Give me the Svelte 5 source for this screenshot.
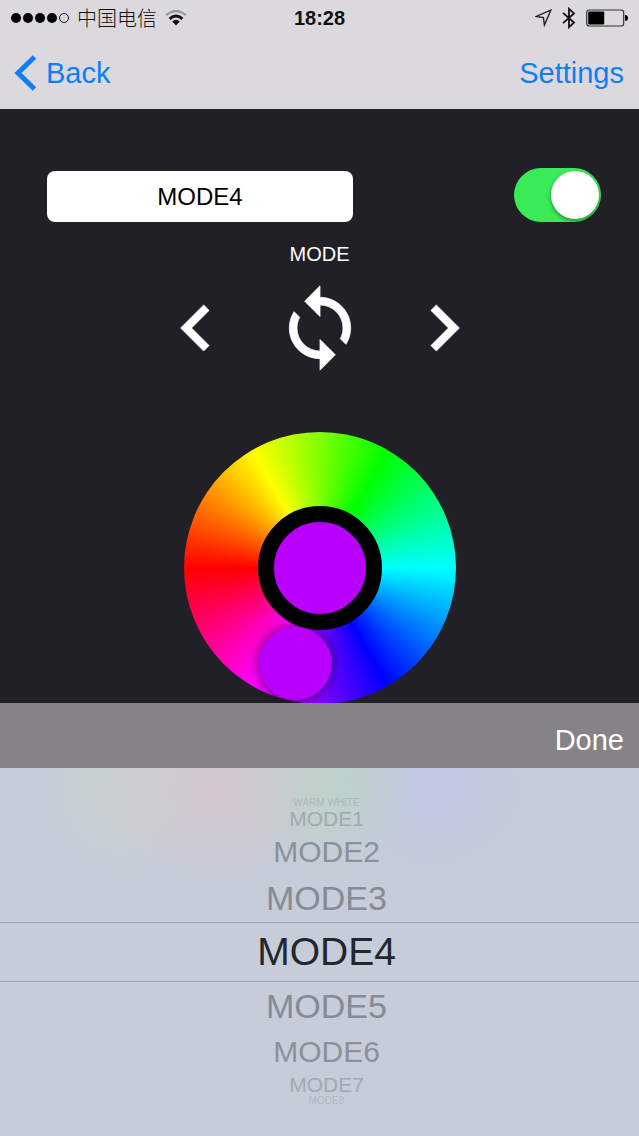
<script lang="ts">
  const modes = ['WARM WHITE', 'MODE1', 'MODE2', 'MODE3', 'MODE4', 'MODE5', 'MODE6', 'MODE7', 'MODE8'];

  let selected = $state(4);
  let power = $state(true);

  // how far a row is from the middle of the drum, 4 rows are visible each way
  function depth(i: number) {
    return Math.min(4, Math.abs(i - selected));
  }

  function step(by: number) {
    selected = Math.max(0, Math.min(modes.length - 1, selected + by));
  }
</script>

<div class="screen">
  <header>
    <div class="status">
      <div class="carrier">
        <svg width="60" height="12" viewBox="0 0 60 12">
          <circle cx="5" cy="6" r="5" />
          <circle cx="17" cy="6" r="5" />
          <circle cx="29" cy="6" r="5" />
          <circle cx="41" cy="6" r="5" />
          <circle cx="53" cy="6" r="4.5" fill="none" stroke="#111" />
        </svg>
        <span>中国电信</span>
        <svg class="wifi" width="22" height="16" viewBox="0 0 22 16" fill="none">
          <path d="M1.2 5.2Q11-3 20.8 5.2" stroke="#96969a" stroke-width="2.4" />
          <path d="M4.6 8.9Q11 3.2 17.4 8.9" stroke="#111" stroke-width="2.8" />
          <path d="M7.2 11.6Q11 8 14.8 11.6L11 15.4Z" fill="#111" />
        </svg>
      </div>
      <time>18:28</time>
      <div class="indicators">
        <svg width="17" height="18" viewBox="0 0 17 18" fill="none" stroke="#222" stroke-width="1.4">
          <path d="M15.8 1.2L1.2 7.4L8.4 8.6L9.4 16Z" />
        </svg>
        <svg width="14" height="22" viewBox="0 0 14 22" fill="none" stroke="#111" stroke-width="1.8">
          <path d="M1 5.8L12 15.6L7 20.2V1.8L12 6.4L1 16.2" />
        </svg>
        <svg width="42" height="18" viewBox="0 0 42 18">
          <rect x="0.7" y="1" width="37" height="16" rx="2.5" fill="none" stroke="#333" stroke-width="1.2" />
          <rect x="2.2" y="2.6" width="16" height="12.8" rx="1" />
          <path d="M39 6Q42 6 42 9Q42 12 39 12Z" />
        </svg>
      </div>
    </div>
    <nav>
      <button class="link">
        <svg width="22" height="36" viewBox="0 0 22 36" fill="none" stroke="#0f7df5" stroke-width="5">
          <path d="M20.5 2L4 18L20.5 34" />
        </svg>
        Back
      </button>
      <button class="link">Settings</button>
    </nav>
  </header>

  <main>
    <div class="top-row">
      <input class="mode-field" type="text" readonly aria-label="Mode" value={modes[selected]} />
      <input class="switch" type="checkbox" aria-label="Power" bind:checked={power} />
    </div>

    <div class="mode-label">MODE</div>

    <div class="mode-controls">
      <button aria-label="Previous mode" onclick={() => step(-1)}>
        <svg viewBox="0 0 24 24"><path d="M15.41 7.41L14 6l-6 6 6 6 1.41-1.41L10.83 12z" /></svg>
      </button>
      <button aria-label="Cycle modes" onclick={() => selected = (selected + 1) % modes.length}>
        <svg viewBox="0 0 24 24">
          <path d="M12 4V1L8 5l4 4V6c3.31 0 6 2.69 6 6 0 1.01-.25 1.97-.7 2.8l1.46 1.46C19.54 15.03 20 13.57 20 12c0-4.42-3.58-8-8-8zm0 14c-3.31 0-6-2.69-6-6 0-1.01.25-1.97.7-2.8L5.24 7.74C4.46 8.97 4 10.43 4 12c0 4.42 3.58 8 8 8v3l4-4-4-4v3z" />
        </svg>
      </button>
      <button aria-label="Next mode" onclick={() => step(1)}>
        <svg viewBox="0 0 24 24"><path d="M10 6L8.59 7.41 13.17 12l-4.58 4.59L10 18l6-6z" /></svg>
      </button>
    </div>

    <div class="wheel">
      <div class="swatch"></div>
      <button class="handle" aria-label="Colour"></button>
    </div>
  </main>

  <section class="picker">
    <div class="toolbar">
      <button class="done">Done</button>
    </div>
    <div class="drum" role="listbox" aria-label="Modes">
      {#each modes as mode, i}
        <button
          class="row d{depth(i)}"
          role="option"
          aria-selected={i === selected}
          onclick={() => selected = i}>{mode}</button>
      {/each}
    </div>
  </section>
</div>

<style>
  :global(body) {
    margin: 0;
    background: #202026;
  }

  .screen {
    display: flex;
    flex-direction: column;
    min-height: 100vh;
    font-family: "Liberation Sans", "Noto Sans CJK SC", sans-serif;
    background: #202026;
  }

  button {
    padding: 0;
    border: none;
    background: none;
    font-family: inherit;
    cursor: pointer;
  }

  svg { display: block; }

  header { background: #dbd9dd; }

  .status {
    display: grid;
    grid-template-columns: 1fr auto 1fr;
    align-items: center;
    height: 36px;
    padding: 0 11px;
    font-size: 20px;
    color: #111;
  }

  .carrier, .indicators {
    display: flex;
    align-items: center;
    gap: 6px;
  }

  .carrier span {
    font-family: "Noto Sans CJK SC", sans-serif;
    font-weight: 300;
    line-height: 24px;
  }

  .wifi { margin-left: 2px; }

  .indicators {
    justify-content: flex-end;
    gap: 10px;
  }

  time { font-weight: 700; }

  nav {
    display: flex;
    justify-content: space-between;
    align-items: center;
    height: 73px;
    padding: 0 15px 0 14px;
  }

  .link {
    display: flex;
    align-items: center;
    gap: 10px;
    font-size: 29px;
    line-height: 36px;
    color: #0f7df5;
  }

  main {
    display: flex;
    flex-direction: column;
    align-items: center;
    flex: 1;
    padding-top: 59px;
  }

  .top-row {
    display: flex;
    justify-content: space-between;
    align-items: flex-end;
    align-self: stretch;
    gap: 24px;
    padding: 0 38px 0 47px;
  }

  .mode-field {
    flex: 0 1 306px;
    min-width: 0;
    height: 51px;
    padding: 0;
    box-sizing: border-box;
    border: none;
    border-radius: 8px;
    background: #fff;
    font-family: inherit;
    font-size: 24px;
    text-align: center;
    color: #000;
    outline: none;
  }

  .switch {
    appearance: none;
    display: flex;
    align-items: center;
    flex: none;
    width: 87px;
    height: 54px;
    margin: 0;
    padding: 0 2px;
    box-sizing: border-box;
    border-radius: 27px;
    background: #77777c;
    cursor: pointer;
  }

  .switch::before {
    content: "";
    width: 48px;
    height: 48px;
    border-radius: 50%;
    background: #fff;
    box-shadow: 0 2px 4px rgba(0, 0, 0, 0.4);
  }

  .switch:checked {
    justify-content: flex-end;
    background: #3aeb58;
  }

  .mode-label {
    margin-top: 20px;
    font-size: 20px;
    line-height: 24px;
    color: #fff;
  }

  .mode-controls {
    display: flex;
    gap: 32px;
    margin-top: 16px;
  }

  .mode-controls svg {
    width: 92px;
    height: 92px;
    fill: #fff;
    stroke: #fff;
    stroke-width: 0.2;
  }

  .wheel {
    position: relative;
    display: grid;
    place-items: center;
    width: 272px;
    height: 272px;
    margin: 58px 0 -1px;
    border-radius: 50%;
    background: conic-gradient(from 270deg, #f00, #ff0, #0f0, #0ff, #00f, #f0f, #f00);
  }

  .swatch {
    width: 92px;
    height: 92px;
    border: 16px solid #000;
    border-radius: 50%;
    background: #b900ff;
  }

  /* sits on the ring at the picked hue */
  .handle {
    position: absolute;
    left: 75px;
    top: 195px;
    width: 73px;
    height: 73px;
    border-radius: 50%;
    background: #b900ff;
    box-shadow: 0 0 12px rgba(0, 0, 0, 0.6);
  }

  .picker { position: relative; }

  .toolbar {
    display: flex;
    justify-content: flex-end;
    align-items: center;
    height: 65px;
    padding: 8px 15px 0 0;
    box-sizing: border-box;
    background: #858386;
  }

  .done {
    font-size: 29px;
    line-height: 36px;
    color: #fff;
  }

  .drum {
    display: flex;
    flex-direction: column;
    padding: 30px 0;
    background:
      radial-gradient(ellipse 80px 90px at 19% 20px, rgba(205, 214, 200, 0.5), transparent),
      radial-gradient(ellipse 120px 90px at 34% 22px, rgba(221, 194, 200, 0.6), transparent),
      radial-gradient(ellipse 100px 90px at 51% 18px, rgba(182, 216, 194, 0.7), transparent),
      radial-gradient(ellipse 110px 90px at 67% 20px, rgba(192, 196, 234, 0.7), transparent),
      #c6ccd8;
  }

  .row {
    box-sizing: border-box;
    padding-left: 14px;
    overflow: hidden;
    white-space: nowrap;
    color: #858b96;
  }

  .d0 {
    height: 60px;
    border-top: 1px solid #a2a9b3;
    border-bottom: 1px solid #a2a9b3;
    font-size: 39px;
    line-height: 58px;
    color: #22262e;
  }

  .d1 { height: 48px; font-size: 34px; line-height: 48px; }
  .d2 { height: 44px; font-size: 30px; line-height: 44px; color: #8b919c; }
  .d3 { height: 22px; font-size: 21px; line-height: 22px; color: #a2a8b2; }
  .d4 { height: 10px; font-size: 10px; line-height: 10px; color: #b0b6c1; }
</style>
